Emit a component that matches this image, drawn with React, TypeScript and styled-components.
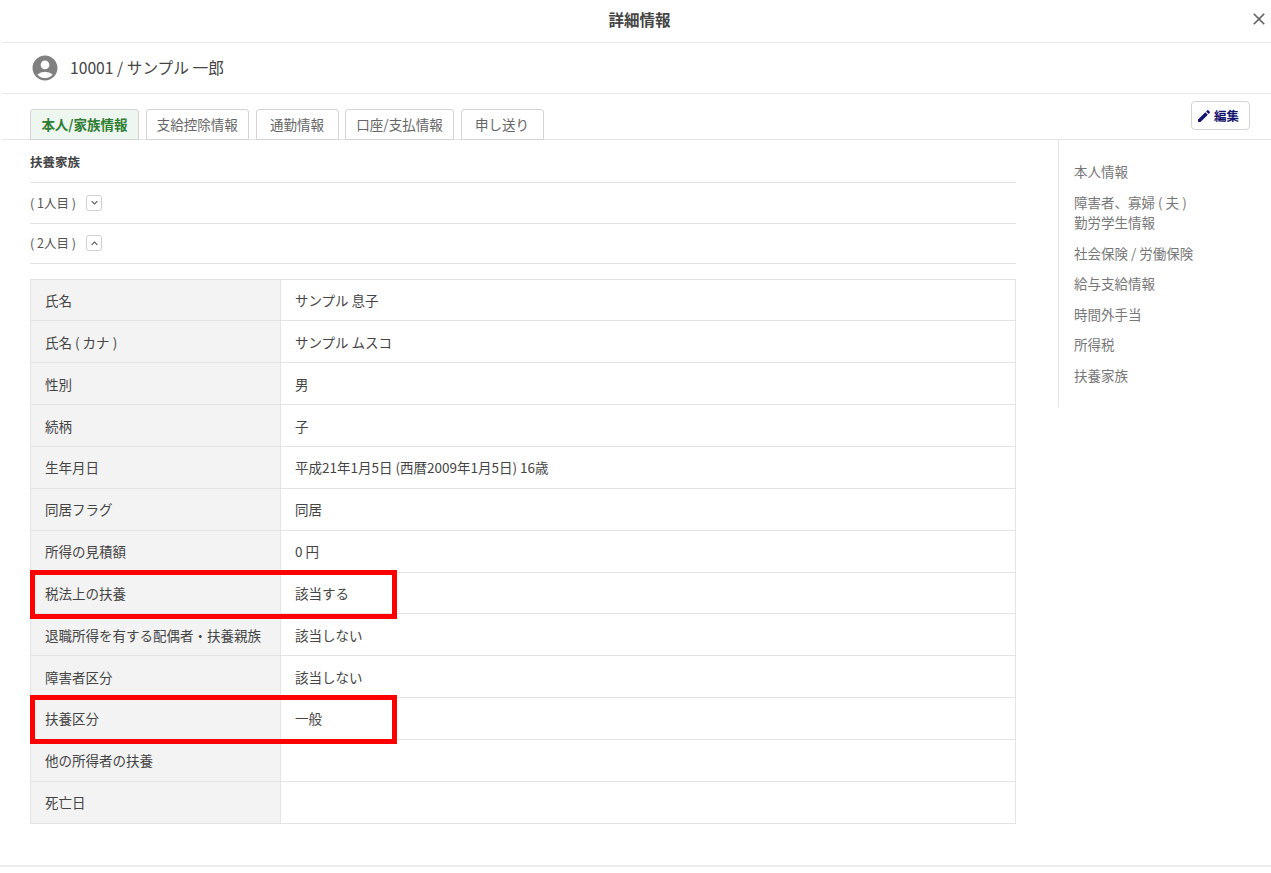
import styled, { createGlobalStyle } from "styled-components";
import { MdAccountCircle, MdClose, MdEdit, MdKeyboardArrowDown, MdKeyboardArrowUp } from "react-icons/md";

const GlobalStyle = createGlobalStyle`
  html, body {
    margin: 0;
    padding: 0;
    background: #fff;
    font-family: "Noto Sans CJK JP", "Noto Sans", sans-serif;
    color: #444;
  }
`;

const Page = styled.div`
  width: 1271px;
  height: 873px;
  overflow: hidden;
  display: flex;
  flex-direction: column;
`;

const Header = styled.header`
  height: 42px;
  flex: none;
  display: flex;
  align-items: center;
  justify-content: center;
  position: relative;
  margin-left: 2px;
  border-bottom: 1px solid #e8e8e8;
`;

const Title = styled.h1`
  margin: 0 0 4px 6px;
  font-size: 15.5px;
  font-weight: 700;
  color: #444;
`;

const CloseButton = styled.button`
  position: absolute;
  top: 8px;
  right: 1px;
  width: 22px;
  height: 22px;
  padding: 0;
  display: flex;
  align-items: center;
  justify-content: center;
  border: 0;
  background: none;
  color: #666;
`;

const UserRow = styled.div`
  height: 50px;
  flex: none;
  display: flex;
  align-items: center;
  gap: 10px;
  margin-left: 2px;
  padding-left: 28px;
  border-bottom: 1px solid #e8e8e8;
`;

const UserName = styled.span`
  margin-bottom: 2px;
  font-size: 15.7px;
  color: #444;
`;

const TabBar = styled.div`
  height: 45px;
  flex: none;
  display: flex;
  align-items: flex-end;
  gap: 6.5px;
  position: relative;
  margin-left: 2px;
  padding-left: 28px;
  border-bottom: 1px solid #e4e4e4;
`;

const Tab = styled.div<{ $active?: boolean; $width: number }>`
  width: ${(p) => p.$width}px;
  height: 31px;
  box-sizing: border-box;
  display: flex;
  align-items: center;
  justify-content: center;
  margin-bottom: -1px;
  padding-bottom: 2px;
  border: 1px solid #d4d4d4;
  border-radius: 3px 3px 0 0;
  font-size: 13.5px;
  font-weight: ${(p) => (p.$active ? 700 : 400)};
  color: ${(p) => (p.$active ? "#2e7d32" : "#666")};
  background: ${(p) => (p.$active ? "#eef7ef" : "#fff")};
`;

const EditButton = styled.button`
  position: absolute;
  top: 7px;
  right: 21px;
  width: 59px;
  height: 29px;
  padding: 0 6px 0 0;
  display: flex;
  align-items: center;
  justify-content: center;
  gap: 2px;
  font-family: inherit;
  font-size: 12.5px;
  font-weight: 700;
  color: #14146e;
  background: #fff;
  border: 1px solid #d4d4d4;
  border-radius: 4px;
`;

const Body = styled.div`
  flex: 1;
  display: flex;
  align-items: flex-start;
`;

const Main = styled.main`
  width: 986px;
  margin-left: 30px;
  flex: none;
`;

const SectionTitle = styled.div`
  height: 43px;
  box-sizing: border-box;
  padding-top: 12px;
  font-size: 12.5px;
  font-weight: 700;
  line-height: 20px;
  color: #444;
  border-bottom: 1px solid #e4e4e4;
`;

const PersonRow = styled.div`
  height: 40.5px;
  box-sizing: border-box;
  display: flex;
  align-items: center;
  gap: 10px;
  border-bottom: 1px solid #e4e4e4;
`;

const PersonName = styled.span`
  margin-bottom: 1px;
  font-size: 12.5px;
  color: #555;
`;

const ToggleButton = styled.button`
  width: 16px;
  height: 16px;
  padding: 0;
  display: flex;
  align-items: center;
  justify-content: center;
  background: #fff;
  border: 1px solid #d0d0d0;
  border-radius: 3px;
  color: #555;
`;

const Table = styled.div`
  margin-top: 14.6px;
  border: 1px solid #e4e4e4;
  border-bottom: 0;
`;

const Row = styled.div`
  height: 41.85px;
  box-sizing: border-box;
  display: grid;
  grid-template-columns: 250px 1fr;
  position: relative;
  border-bottom: 1px solid #e4e4e4;
`;

const Label = styled.div`
  display: flex;
  align-items: center;
  padding-left: 14px;
  font-size: 13.5px;
  color: #444;
  background: #f3f3f3;
  border-right: 1px solid #e4e4e4;
`;

const Value = styled.div`
  display: flex;
  align-items: center;
  padding-left: 14px;
  font-size: 13.5px;
  color: #444;
`;

const Highlight = styled.div`
  position: absolute;
  z-index: 1;
  top: -2.7px;
  left: -1.5px;
  width: 367.5px;
  height: 49px;
  box-sizing: border-box;
  border: 5px solid #ff0000;
`;

const SideNav = styled.nav`
  width: 197px;
  height: 267px;
  margin-left: 42px;
  box-sizing: border-box;
  padding: 21px 0 0 15px;
  border-left: 1px solid #e4e4e4;
  display: flex;
  flex-direction: column;
  gap: 10px;
`;

const NavItem = styled.div`
  font-size: 13.5px;
  line-height: 20.5px;
  color: #777;
`;

const Footer = styled.div`
  position: absolute;
  top: 865px;
  left: 0;
  width: 1271px;
  height: 2px;
  background: #ececec;
`;

const tabs = [
  { label: "本人/家族情報", width: 109, active: true },
  { label: "支給控除情報", width: 103.5 },
  { label: "通勤情報", width: 83 },
  { label: "口座/支払情報", width: 109 },
  { label: "申し送り", width: 83 },
];

const rows: { label: string; value: string; marked?: boolean }[] = [
  { label: "氏名", value: "サンプル 息子" },
  { label: "氏名 ( カナ )", value: "サンプル ムスコ" },
  { label: "性別", value: "男" },
  { label: "続柄", value: "子" },
  { label: "生年月日", value: "平成21年1月5日 (西暦2009年1月5日) 16歳" },
  { label: "同居フラグ", value: "同居" },
  { label: "所得の見積額", value: "0 円" },
  { label: "税法上の扶養", value: "該当する", marked: true },
  { label: "退職所得を有する配偶者・扶養親族", value: "該当しない" },
  { label: "障害者区分", value: "該当しない" },
  { label: "扶養区分", value: "一般", marked: true },
  { label: "他の所得者の扶養", value: "" },
  { label: "死亡日", value: "" },
];

const App = () => {
  return (
    <Page>
      <GlobalStyle />
      <Header>
        <Title>詳細情報</Title>
        <CloseButton aria-label="閉じる">
          <MdClose size={20} />
        </CloseButton>
      </Header>
      <UserRow>
        <MdAccountCircle size={30} color="#808080" />
        <UserName>10001 / サンプル 一郎</UserName>
      </UserRow>
      <TabBar>
        {tabs.map((tab) => (
          <Tab key={tab.label} $active={tab.active} $width={tab.width}>
            {tab.label}
          </Tab>
        ))}
        <EditButton>
          <MdEdit size={16} />
          編集
        </EditButton>
      </TabBar>
      <Body>
        <Main>
          <SectionTitle>扶養家族</SectionTitle>
          <PersonRow>
            <PersonName>( 1人目 )</PersonName>
            <ToggleButton>
              <MdKeyboardArrowDown size={13} />
            </ToggleButton>
          </PersonRow>
          <PersonRow>
            <PersonName>( 2人目 )</PersonName>
            <ToggleButton>
              <MdKeyboardArrowUp size={13} />
            </ToggleButton>
          </PersonRow>
          <Table>
            {rows.map((row) => (
              <Row key={row.label}>
                <Label>{row.label}</Label>
                <Value>{row.value}</Value>
                {row.marked && <Highlight />}
              </Row>
            ))}
          </Table>
        </Main>
        <SideNav>
          <NavItem>本人情報</NavItem>
          <NavItem>
            障害者、寡婦 ( 夫 )
            <br />
            勤労学生情報
          </NavItem>
          <NavItem>社会保険 / 労働保険</NavItem>
          <NavItem>給与支給情報</NavItem>
          <NavItem>時間外手当</NavItem>
          <NavItem>所得税</NavItem>
          <NavItem>扶養家族</NavItem>
        </SideNav>
      </Body>
      <Footer />
    </Page>
  );
};

export default App;
